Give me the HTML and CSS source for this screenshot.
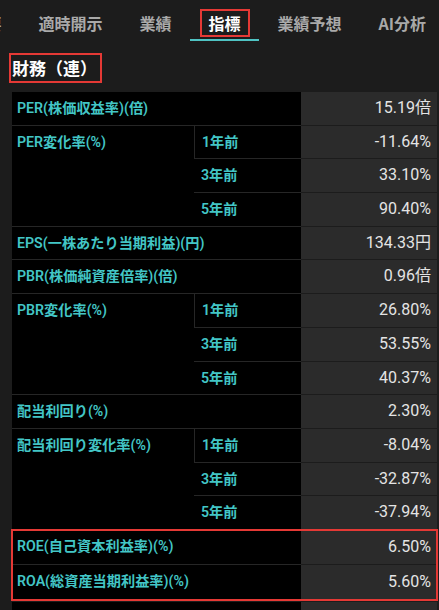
FILE: index.html
```html
<!DOCTYPE html>
<html lang="ja">
<head>
    <meta charset="UTF-8">
    <meta name="viewport" content="width=device-width, initial-scale=1.0">
    <title>指標 - 財務（連）</title>
    <link rel="stylesheet" href="styles.css">
</head>
<body>
    <div class="tabs">
        <div class="tabstrip">
            <div class="tab">概要</div>
            <div class="tab">適時開示</div>
            <div class="tab">業績</div>
            <div class="tab active"><span class="mark">指標</span></div>
            <div class="tab">業績予想</div>
            <div class="tab">AI分析</div>
        </div>
    </div>

    <div class="section">
        <h2 class="title"><span class="mark">財務（連）</span></h2>

        <div class="metrics">
            <div class="item">
                <div class="name wide">PER(株価収益率)(倍)</div>
                <div class="val">15.19倍</div>
            </div>
            <div class="item">
                <div class="name tall">PER変化率(%)</div>
                <div class="sub first">1年前</div><div class="val">-11.64%</div>
                <div class="sub">3年前</div><div class="val">33.10%</div>
                <div class="sub last">5年前</div><div class="val">90.40%</div>
            </div>
            <div class="item">
                <div class="name wide">EPS(一株あたり当期利益)(円)</div>
                <div class="val">134.33円</div>
            </div>
            <div class="item">
                <div class="name wide">PBR(株価純資産倍率)(倍)</div>
                <div class="val">0.96倍</div>
            </div>
            <div class="item">
                <div class="name tall">PBR変化率(%)</div>
                <div class="sub first">1年前</div><div class="val">26.80%</div>
                <div class="sub">3年前</div><div class="val">53.55%</div>
                <div class="sub last">5年前</div><div class="val">40.37%</div>
            </div>
            <div class="item">
                <div class="name wide">配当利回り(%)</div>
                <div class="val">2.30%</div>
            </div>
            <div class="item">
                <div class="name tall">配当利回り変化率(%)</div>
                <div class="sub first">1年前</div><div class="val">-8.04%</div>
                <div class="sub">3年前</div><div class="val">-32.87%</div>
                <div class="sub last">5年前</div><div class="val">-37.94%</div>
            </div>
            <div class="highlight">
                <div class="item">
                    <div class="name wide">ROE(自己資本利益率)(%)</div>
                    <div class="val">6.50%</div>
                </div>
                <div class="item">
                    <div class="name wide">ROA(総資産当期利益率)(%)</div>
                    <div class="val">5.60%</div>
                </div>
            </div>
            <div class="item next">
                <div class="name wide">売上高(百万円)</div>
                <div class="val">—</div>
            </div>
        </div>
    </div>
</body>
</html>
```

FILE: styles.css
```css
body {
    margin: 0;
    padding: 0;
    background-color: #1c1c1c;
    color: #e4e4e4;
    font-family: Roboto, "Noto Sans CJK JP", sans-serif;
    overflow: hidden;
}
.tabs {
    height: 41px;
    overflow: hidden;
}
.tabstrip {
    display: flex;
    margin-left: -49px;
    white-space: nowrap;
}
.tab {
    box-sizing: border-box;
    height: 41px;
    padding: 11px 18.5px 0;
    font-family: "Noto Sans CJK JP", sans-serif;
    font-size: 16px;
    font-weight: bold;
    line-height: 24px;
    color: #a9a9a9;
}
.tab.active {
    color: #fff;
    border-bottom: 2px solid #4fc3c3;
}
.tab .mark {
    display: inline-block;
    margin: -3px -9px 0;
    padding: 1px 7px 0;
    border: 2px solid #e53935;
    line-height: 23px;
}
.section {
    padding: 12px 2px 0 12px;
}
.title {
    margin: 0 0 9px -3px;
    font-family: "Noto Sans CJK JP", sans-serif;
    font-size: 17px;
    font-weight: bold;
    color: #fff;
}
.title .mark {
    display: inline-block;
    padding: 0 3px 0 1px;
    border: 2px solid #e53935;
    line-height: 26px;
}
.metrics {
    width: 425px;
}
.item {
    display: grid;
    grid-template-columns: 182px 107px 136px;
    grid-auto-rows: 33.7px;
}
.name, .sub {
    box-sizing: border-box;
    padding: 0 5px;
    background: #000;
    color: #43c6c6;
    font-size: 14.2px;
    font-weight: 600;
    line-height: 32.7px;
    border-bottom: 1px solid #262626;
    white-space: nowrap;
}
.name.wide {
    grid-column: 1 / 3;
}
.name.tall {
    grid-row: 1 / 4;
}
.sub {
    padding-left: 7px;
}
.sub.first {
    border-left: 1px solid #262626;
}
.val {
    box-sizing: border-box;
    padding: 0 6px;
    background: #2b2b2b;
    text-align: right;
    font-size: 16px;
    line-height: 32.7px;
    border-bottom: 1px solid #1c1c1c;
}
.highlight {
    outline: 2px solid #e53935;
    outline-offset: -1px;
    position: relative;
    z-index: 1;
}
.highlight .item {
    grid-auto-rows: 35px;
}
.highlight .name, .highlight .val {
    line-height: 33px;
}
.item.next {
    margin-top: 2px;
}
```
